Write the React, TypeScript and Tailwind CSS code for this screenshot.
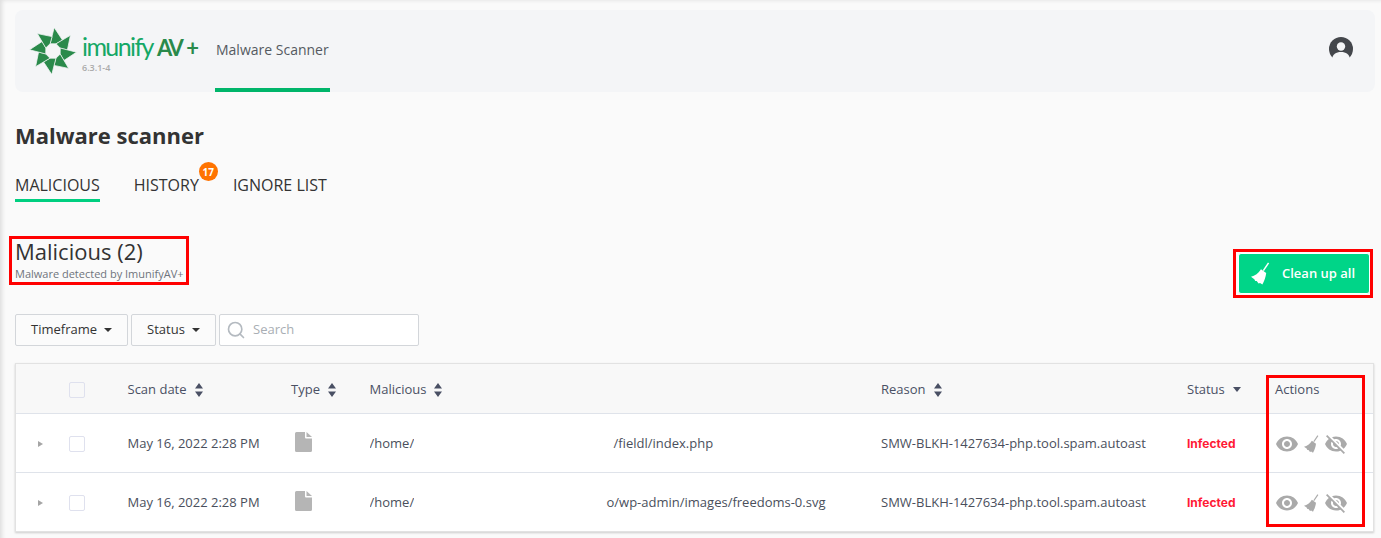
import React from 'react';
import { MdVisibility, MdVisibilityOff } from 'react-icons/md';
import { Search } from 'lucide-react';

const Sort = () => (
  <svg width="8" height="14" viewBox="0 0 8 14" className="ml-2 shrink-0" fill="#4a5064">
    <path d="M4 0l4 5.500H0zM4 14L0 8.500h8z" />
  </svg>
);

const Caret = () => <span className="ml-[7px] w-0 h-0 border-x-[4px] border-x-transparent border-t-[4px] border-t-[#333]" />;

const Broom = ({ w, h, className }: { w: number; h: number; className?: string }) => (
  <svg width={w} height={h} viewBox="0 0 20 24" className={className} fill="currentColor">
    <path d="M10.500 7.500L16 11.500C15.500 16 14 20 12 23.500L9.500 22L8 22.500L6 20L4.500 20L3.500 18L0 15.500C4 14.500 8 12 10.500 7.500Z" />
    <path d="M13 9L18.500 .8" stroke="currentColor" strokeWidth="1.600" />
  </svg>
);

const FileIcon = () => (
  <svg width="17" height="20" viewBox="0 0 17 20" className="ml-[4px] -mt-[4px]" fill="#b5b5b5">
    <path d="M1.500 0H10V5.500a1 1 0 0 0 1 1H17V18.500a1.500 1.500 0 0 1-1.500 1.500h-14A1.500 1.500 0 0 1 0 18.500v-17A1.500 1.500 0 0 1 1.500 0z" />
    <path d="M11.500 0L17 5H11.500z" />
  </svg>
);

const Logo = () => {
  const blades = [3, 48, 93, 138, 183, 228, 273, 318];
  return (
    <svg width="48" height="46" viewBox="-23 -22 46 44" className="shrink-0">
      {blades.map((a) => (
        <path key={a} d="M-3.200 -6.800L0 -22.500L8.600 -10.800L2.600 -7Z" fill="#2a8a4b" stroke="#f4f5f7" strokeWidth=".7" transform={`rotate(${a})`} />
      ))}
    </svg>
  );
};

const rowCols = 'grid grid-cols-[53px_58.500px_163.500px_78.500px_511.500px_306px_88px_1fr] items-center';

const rows = [
  { tail: '/fieldl/index.php', pad: 'ml-[200px]' },
  { tail: 'o/wp-admin/images/freedoms-0.svg', pad: 'ml-[193px]' },
];

const Row = ({ tail, pad }: { tail: string; pad: string }) => (
  <div className={`${rowCols} h-[59px] pt-[2px] bg-white border-t border-[#dfe3ea] text-[13px] text-[#4a4f5c]`}>
    <span className="ml-[22px] w-0 h-0 border-y-[3.500px] border-y-transparent border-l-[5px] border-l-[#a5a5a5]" />
    <span className="w-4 h-4 border border-[#dfe1ee] rounded-[2px] bg-white" />
    <span>May 16, 2022 2:28 PM</span>
    <FileIcon />
    <div className="flex">
      <span className="w-[44px] overflow-hidden">/home/</span>
      <span className={pad}>{tail}</span>
    </div>
    <span>SMW-BLKH-1427634-php.tool.spam.autoast</span>
    <span className="text-[12px] font-bold text-[#ff1a35] font-['Inter',sans-serif]">Infected</span>
    <div className="flex items-center text-[#aaaaaa]">
      <MdVisibility size={24} />
      <Broom w={15} h={18} className="ml-[5px]" />
      <MdVisibilityOff size={24} className="ml-[5px]" />
    </div>
  </div>
);

export default function App() {
  return (
    <div className="relative w-[1381px] h-[538px] overflow-hidden bg-[#fafafa] pt-[10px] pl-[15px] pr-[6px] font-['Open_Sans',sans-serif] shadow-[inset_4px_2px_4px_-2px_#dddddd]">
      <header className="flex items-center h-[82px] pr-[22px] pl-[14px] rounded-lg bg-[#f4f5f7]">
        <Logo />
        <div className="ml-[5px] w-[135px] mt-[4px]">
          <div className="flex items-baseline leading-[22px] whitespace-nowrap font-['Lato',sans-serif]">
            <span className="text-[25px] font-normal text-[#14a866] tracking-[-1.600px]">imunify</span>
            <span className="ml-[4px] text-[22px] font-bold text-[#2a8a4b] tracking-[-2.500px]">AV</span>
            <span className="ml-[5px] text-[22px] font-bold text-[#2a8a4b]">+</span>
          </div>
          <div className="mt-[5px] text-[9px] leading-[8px] text-[#aaaaaa] font-semibold">6.3.1-4</div>
        </div>
        <nav className="h-full flex items-center w-[115px] border-b-4 border-[#00b56a] text-[14px] text-[#555a61] pl-[1px] ml-[-2px] whitespace-nowrap">
          Malware Scanner
        </nav>
        <svg width="24" height="22" viewBox="0 0 24 22" className="ml-auto -mt-[6px]">
          <circle cx="12" cy="12" r="12" fill="#44474c" />
          <circle cx="12" cy="9.500" r="4.200" fill="#f4f5f7" />
          <path d="M3 22c.5-4.500 4-7 9-7s8.500 2.500 9 7z" fill="#f4f5f7" />
        </svg>
      </header>

      <h1 className="mt-[28px] text-[22px] leading-[30px] font-bold text-[#333333]">Malware scanner</h1>

      <div className="mt-[20px] flex text-[16px] leading-[22px] text-[#333333]">
        <span className="h-[32px] pt-[4px] border-b-[3px] border-[#00cf80]">MALICIOUS</span>
        <span className="relative ml-[34px] pt-[4px]">
          HISTORY
          <span className="absolute -top-[8px] left-[65px] flex items-center justify-center w-[19px] h-[19px] rounded-full bg-[#ff7300] text-white text-[10px] font-bold">17</span>
        </span>
        <span className="ml-[34px] pt-[4px]">IGNORE LIST</span>
      </div>

      <div className="mt-[34px] flex items-start justify-between pr-[5px]">
        <div>
          <div className="text-[22px] leading-[30px] text-[#333333]">Malicious (2)</div>
          <div className="mt-[1px] text-[11px] leading-[14px] text-[#6f747c]">Malware detected by ImunifyAV+</div>
        </div>
        <button className="mt-[17px] flex items-center w-[132px] h-[41px] rounded-[3px] bg-[#00d588] border border-white text-white text-[13px] font-semibold pl-[12px]">
          <Broom w={19} h={23} />
          <span className="ml-[12px]">Clean up all</span>
        </button>
      </div>

      <div className="mt-[20px] flex gap-[3px] text-[13px] text-[#333333]">
        <button className="flex items-center justify-center w-[113px] h-[32px] border border-[#d3d6da] rounded-[2px] bg-[#fbfbfb]">Timeframe<Caret /></button>
        <button className="flex items-center justify-center w-[85px] h-[32px] border border-[#d3d6da] rounded-[2px] bg-[#fbfbfb]">Status<Caret /></button>
        <div className="flex items-center w-[200px] h-[32px] border border-[#d3d6da] rounded-[2px] bg-white pl-[6px] text-[#a9aeb4]">
          <Search size={20} className="text-[#b4bac0]" strokeWidth={2} />
          <span className="ml-[7px]">Search</span>
        </div>
      </div>

      <div className="mt-[17px] mr-[1px] border-x border-b border-[#e2e2e2] border-t shadow-[0_1px_2px_#cccccc]">
        <div className={`${rowCols} h-[49px] pt-[2px] bg-[#f8f8f8] text-[13px] text-[#4a5064]`}>
          <span />
          <span className="w-4 h-4 border border-[#dfe1ee] rounded-[2px]" />
          <span className="flex items-center">Scan date<Sort /></span>
          <span className="flex items-center">Type<Sort /></span>
          <span className="flex items-center">Malicious<Sort /></span>
          <span className="flex items-center">Reason<Sort /></span>
          <span className="flex items-center">Status<span className="ml-[8px] w-0 h-0 border-x-[4px] border-x-transparent border-t-[5px] border-t-[#4a5064]" /></span>
          <span>Actions</span>
        </div>
        {rows.map((r, i) => <Row key={i} tail={r.tail} pad={r.pad} />)}
      </div>

      <div className="absolute left-[9px] top-[236px] w-[180px] h-[49px] border-[3px] border-[#ff0000]" />
      <div className="absolute left-[1233px] top-[249px] w-[140px] h-[49px] border-[3px] border-[#ff0000]" />
      <div className="absolute left-[1266px] top-[375px] w-[99px] h-[152px] border-[3px] border-[#ff0000]" />
    </div>
  );
}
